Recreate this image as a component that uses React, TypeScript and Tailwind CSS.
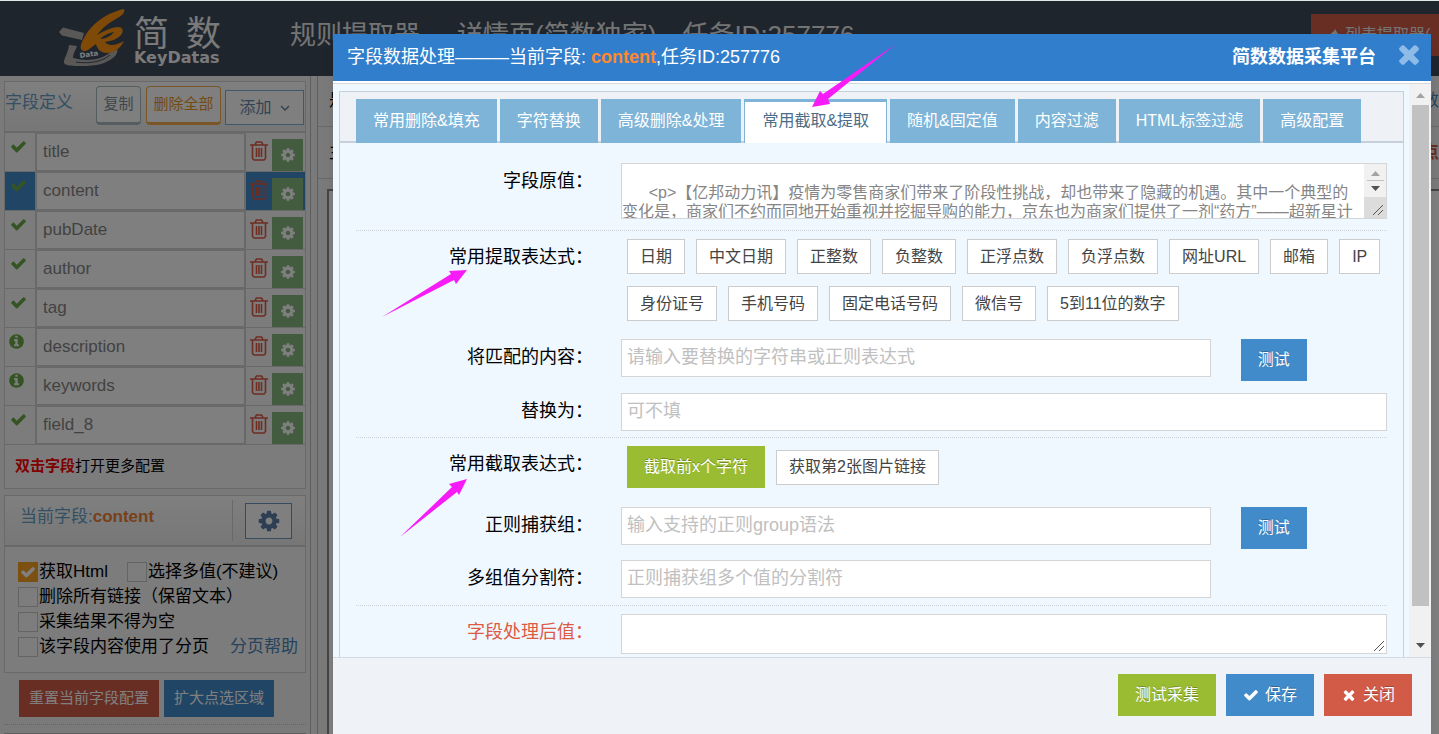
import { useState } from 'react';
import { clsx } from 'clsx';

const ICONS = {
  check:
    'M1671 566q0 40-28 68l-724 724-136 136q-28 28-68 28t-68-28l-136-136-362-362q-28-28-28-68t28-68l136-136q28-28 68-28t68 28l294 295 656-657q28-28 68-28t68 28l136 136q28 28 28 68z',
  times:
    'M1490 1322q0 40-28 68l-136 136q-28 28-68 28t-68-28l-294-294-294 294q-28 28-68 28t-68-28l-136-136q-28-28-28-68t28-68l294-294-294-294q-28-28-28-68t28-68l136-136q28-28 68-28t68 28l294 294 294-294q28-28 68-28t68 28l136 136q28 28 28 68t-28 68l-294 294 294 294q28 28 28 68z',
  cog: 'M1152 896q0-106-75-181t-181-75-181 75-75 181 75 181 181 75 181-75 75-181zm512-109v222q0 12-8 23t-20 13l-185 28q-19 54-39 91 35 50 107 138 10 12 10 25t-9 23q-27 37-99 108t-94 71q-12 0-26-9l-138-108q-44 23-91 38-16 136-29 186-7 28-36 28h-222q-14 0-24.500-8.500t-11.500-21.500l-28-184q-49-16-90-37l-141 107q-10 9-25 9-14 0-25-11-126-114-165-168-7-10-7-23 0-12 8-23 15-21 51-66.500t54-70.500q-27-50-41-99l-183-27q-13-2-21-12.500t-8-23.500v-222q0-12 8-23t19-13l186-28q14-46 39-92-40-57-107-138-10-12-10-24 0-10 9-23 26-36 98.500-107.500t94.500-71.500q13 0 26 10l138 107q44-23 91-38 16-136 29-186 7-28 36-28h222q14 0 24.500 8.500t11.500 21.500l28 184q49 16 90 37l142-107q9-9 24-9 13 0 25 10 129 119 165 170 7 8 7 22 0 12-8 23-15 21-51 66.500t-54 70.500q26 50 41 98l183 28q13 2 21 12.500t8 23.500z',
  info: 'M1152 1376v-160q0-14-9-23t-23-9h-96v-512q0-14-9-23t-23-9h-320q-14 0-23 9t-9 23v160q0 14 9 23t23 9h96v320h-96q-14 0-23 9t-9 23v160q0 14 9 23t23 9h448q14 0 23-9t9-23zm-128-896v-160q0-14-9-23t-23-9h-192q-14 0-23 9t-9 23v160q0 14 9 23t23 9h192q14 0 23-9t9-23zm640 416q0 209-103 385.500t-279.500 279.500-385.500 103-385.500-103-279.500-279.500-103-385.500 103-385.500 279.500-279.500 385.500-103 385.500 103 279.500 279.500 103 385.500z',
};

type IconName = keyof typeof ICONS;

function Icon({ name, className }: { name: IconName; className?: string }) {
  return (
    <svg viewBox="0 0 1792 1792" fill="currentColor" aria-hidden="true" className={clsx('shrink-0', className)}>
      <path d={ICONS[name]} />
    </svg>
  );
}

function TrashIcon() {
  return (
    <svg viewBox="0 0 18 20" className="h-5 w-[18px] text-[#dd5a43]" fill="none" stroke="currentColor" strokeWidth="1.6" aria-hidden="true">
      <path d="M0 4h18M5.500 4V2.500L6.500 1h5l1 1.500V4M2.500 4v13.500L4 19h10l1.500-1.500V4M6.500 7v9M9 7v9M11.500 7v9" />
    </svg>
  );
}

function Caret({ up, className }: { up?: boolean; className?: string }) {
  return (
    <svg viewBox="0 0 9 5" className={clsx('h-[5px] w-[9px]', className)} fill="currentColor" aria-hidden="true">
      <path d={up ? 'M0 5h9L4.500 0z' : 'M0 0h9L4.500 5z'} />
    </svg>
  );
}

function Grip() {
  return (
    <svg viewBox="0 0 12 12" className="h-3 w-3" fill="none" stroke="#555" aria-hidden="true">
      <path d="M1 11L11 1M6 11l5-5" />
    </svg>
  );
}

function Logo() {
  return (
    <div className="flex items-start">
      <svg viewBox="0 0 68 58" className="mt-2 h-[58px] w-[68px]" aria-hidden="true">
        {/* dish */}
        <path d="M1 24L5 19.500 26 25l-2 7-20-4.500z" fill="#b5b0ae" />
        <path d="M11 37l8 1c-1 4-4 7-4 12 12 3 25 3 35-4 5-3 6-6 6-9 5 3 4 9 0 12-8 7-18 9-32 9-9 0-16 0-18-3-1-3 4-9 5-18z" fill="#b5b0ae" />
        <path d="M18 54c12 2 26 0 34-7" fill="none" stroke="#3c4a5a" />
        {/* brush k */}
        <path
          d="M66 1c1 3-1 6-5 8-9 5-17 11-22 18 7-4 15-8 21-8 5 0 6 4 3 8-4 4-9 6-16 7 3 4 10 4 19-1-4 8-10 12-17 12-6 0-10-4-11-9l-8 6c-3 2-6 1-7-1-1-4 1-7 3-11C32 18 47 5 66 1zM42 31c6 0 11-3 14-7-6 1-11 4-14 7z"
          fill="#ff9411"
        />
        <text x="22" y="50" fontSize="7" fontWeight="bold" fill="#fff" fontFamily="DejaVu Sans" transform="rotate(-8 22 50)">
          Data
        </text>
      </svg>
      <div className="ml-2 text-[#f4f4f4]">
        <div className="flex gap-[17px] pt-4 text-[35px] leading-9">
          <span>简</span>
          <span>数</span>
        </div>
        <div className="font-['DejaVu_Sans',sans-serif] text-[16px] leading-3 font-bold">KeyDatas</div>
      </div>
    </div>
  );
}

const FIELDS: { name: string; icon: IconName }[] = [
  { name: 'title', icon: 'check' },
  { name: 'content', icon: 'check' },
  { name: 'pubDate', icon: 'check' },
  { name: 'author', icon: 'check' },
  { name: 'tag', icon: 'check' },
  { name: 'description', icon: 'info' },
  { name: 'keywords', icon: 'info' },
  { name: 'field_8', icon: 'check' },
];

function FieldRow({ name, icon, active }: { name: string; icon: IconName; active: boolean }) {
  return (
    <li className="flex h-[39px] border-b border-[#d2d2d2]">
      <div className={clsx('w-[31px] border-r border-[#d2d2d2] pt-[5px]', icon === 'check' ? 'pl-[5px]' : 'pl-[3px]', active && 'bg-[#428bca]')}>
        <Icon name={icon} className="h-[17px] w-[17px] text-[#69aa46]" />
      </div>
      <input
        aria-label={name}
        defaultValue={name}
        className="min-w-0 flex-1 border border-[#d2d2d2] bg-white px-[6px] text-[17px] text-[#858585] outline-none"
      />
      <div className={clsx('flex w-[60px] items-end justify-between border-l border-[#d2d2d2] pr-[2px] pl-1', active && 'bg-[#428bca]')}>
        <button aria-label={`删除 ${name}`} className="mb-[10px]">
          <TrashIcon />
        </button>
        <button aria-label={`配置 ${name}`} className="flex h-8 w-[31px] items-center justify-center bg-[#87b87f] text-white">
          <Icon name="cog" className="h-4 w-4" />
        </button>
      </div>
    </li>
  );
}

function Check({ label, defaultChecked }: { label: string; defaultChecked?: boolean }) {
  return (
    <label className="flex h-[25px] items-center gap-px">
      <span className="relative flex">
        <input
          type="checkbox"
          defaultChecked={defaultChecked}
          className="peer h-5 w-5 appearance-none border border-[#c8c8c8] bg-[#fafafa] checked:border-[#f9a021] checked:bg-[#f9a021]"
        />
        <Icon name="check" className="absolute top-[2px] left-[2px] hidden h-4 w-4 text-white peer-checked:block" />
      </span>
      {label}
    </label>
  );
}

function Sidebar() {
  return (
    <aside className="w-[311px] shrink-0 border-r border-[#bdbdbd] pt-[5px] pr-1 pl-1 text-[17px]">
      <section className="border border-[#d2d2d2] bg-[#f9f9f9]">
        <div className="flex h-[51px] items-start border-b-2 border-[#d2d2d2] bg-linear-to-b from-white to-[#eee]">
          <h2 className="mt-2 w-[91px] leading-[26px] text-[#669fc7]">字段定义</h2>
          <button className="mt-1 h-[39px] w-[45px] rounded border border-b-[3px] border-[#abbac3] bg-white text-[15px] text-[#808d94]">复制</button>
          <button className="mt-1 ml-[5px] h-[39px] w-[75px] rounded border border-b-[3px] border-[#f0ac4b] bg-white text-[15px] text-[#e59729]">
            删除全部
          </button>
          <button className="mt-2 mr-px ml-1 flex h-[35px] flex-1 items-center justify-center gap-2 border border-[#7fb0d8] bg-white text-[16px] text-[#6688a6]">
            添加
            <svg viewBox="0 0 10 6" className="h-[6px] w-[10px]" fill="none" stroke="currentColor" strokeWidth="1.500" aria-hidden="true">
              <path d="M1 1l4 4 4-4" />
            </svg>
          </button>
        </div>
        <ul>
          {FIELDS.map((field) => (
            <FieldRow key={field.name} {...field} active={field.name === 'content'} />
          ))}
        </ul>
        <p className="px-[10px] pt-2 pb-[9px] text-[15px] leading-[26px]">
          <b className="text-[#f00]">双击字段</b>打开更多配置
        </p>
      </section>

      <section className="mt-[6px] border border-[#d2d2d2] bg-[#f9f9f9]">
        <div className="flex h-[51px] border-b-2 border-[#d2d2d2] bg-linear-to-b from-white to-[#eee]">
          <h2 className="mt-2 flex-1 pl-[15px] leading-[26px] text-[#669fc7]">
            当前字段:<b className="text-[#f08030]">content</b>
          </h2>
          <span className="my-1 w-px bg-[#d2d2d2]" />
          <button aria-label="当前字段配置" className="mt-[7px] mr-[13px] ml-3 flex h-9 w-[47px] items-center justify-center border border-[#6d97bb] bg-white text-[#5c7fa8]">
            <Icon name="cog" className="h-6 w-6" />
          </button>
        </div>
        <div className="px-[13px] pt-3 pb-3 text-black">
          <div className="flex gap-[19px]">
            <Check label="获取Html" defaultChecked />
            <Check label="选择多值(不建议)" />
          </div>
          <Check label="删除所有链接（保留文本）" />
          <Check label="采集结果不得为空" />
          <div className="flex items-center justify-between">
            <Check label="该字段内容使用了分页" />
            <a href="#help" className="-mr-[6px] text-[#4d86bb]">
              分页帮助
            </a>
          </div>
        </div>
      </section>

      <div className="mt-[7px] flex gap-[5px] border-b border-dotted border-[#c8c8c8] px-[15px] pb-[7px] text-[15px] text-white">
        <button className="h-[37px] bg-[#d15b47] px-[10px]">重置当前字段配置</button>
        <button className="h-[37px] bg-[#428bca] px-[10px]">扩大点选区域</button>
      </div>
      <div className="mt-2 border-t border-[#bdbdbd]" />
    </aside>
  );
}

function ExtractorPage() {
  return (
    <div className="flex h-full flex-col bg-[#f4f4f4]">
      <header className="flex h-[76px] shrink-0 items-start bg-[#3c4a5a] pl-[58px] text-[#e8e8e8]">
        <Logo />
        <h1 className="mt-[17px] ml-[69px] flex text-[26px] leading-9">
          <span>规则提取器</span>
          <span className="ml-[37px]">详情页(简数独家)</span>
          <span className="ml-[26px]">任务ID:257776</span>
        </h1>
        <div className="mt-[14px] flex flex-1 justify-end">
          <button className="flex h-[42px] w-32 items-center gap-[6px] overflow-hidden bg-[#d15b47] pl-[18px] text-[16px] whitespace-nowrap">
            <svg viewBox="0 0 10 14" className="h-[14px] w-[10px] shrink-0" fill="currentColor" aria-hidden="true">
              <path d="M6 0c0 3 4 5 4 9a5 5 0 0 1-10 0c0-3 3-4 5-6 1-1 1-2 1-3z" />
            </svg>
            列表提取器(
          </button>
        </div>
      </header>
      <div className="flex min-h-0 flex-1">
        <Sidebar />
        <main className="ml-[6px] flex flex-1 flex-col border-l border-[#bdbdbd] text-[17px]">
          <div className="flex h-[51px] items-center justify-between border-b border-[#d2d2d2] pl-[11px] text-black">
            <span>是</span>
            <span className="text-[#4d86bb]">数</span>
          </div>
          <div className="flex h-[52px] items-center justify-between border-b border-[#d2d2d2] pl-[11px] text-black">
            <span>主</span>
            <b className="text-[#d15b47]">点</b>
          </div>
          <div className="mt-[10px] ml-[9px] flex-1 border-t-2 border-l-2 border-[#8a8a8a] bg-white" />
        </main>
      </div>
    </div>
  );
}

const TABS = ['常用删除&填充', '字符替换', '高级删除&处理', '常用截取&提取', '随机&固定值', '内容过滤', 'HTML标签过滤', '高级配置'];

const EXTRACTORS = [
  '日期', '中文日期', '正整数', '负整数', '正浮点数', '负浮点数', '网址URL', '邮箱', 'IP',
  '身份证号', '手机号码', '固定电话号码', '微信号', '5到11位的数字',
];

const SOURCE_TEXT = `
      <p>【亿邦动力讯】疫情为零售商家们带来了阶段性挑战，却也带来了隐藏的机遇。其中一个典型的
变化是，商家们不约而同地开始重视并挖掘导购的能力，京东也为商家们提供了一剂“药方”——超新星计`;

const inputClass = 'h-[38px] border border-[#d5d5d5] bg-white px-[5px] pb-[2px] text-[18px] text-[#555] outline-none placeholder:text-[#c0c0c0]';
const chipClass = 'h-[35px] border border-[#ccc] bg-white px-3 text-[16px] text-[#444]';
const solidClass = 'flex h-[42px] items-center justify-center gap-[6px] px-[17px] text-[16px] text-white text-shadow-[0_-1px_0_rgb(0_0_0/0.25)]';

function Row({ label, htmlFor, danger, className, children }: {
  label: string;
  htmlFor?: string;
  danger?: boolean;
  className?: string;
  children: React.ReactNode;
}) {
  const labelClass = clsx('w-[237px] shrink-0 pt-[5px] text-right text-[18px] leading-[26px]', danger ? 'text-[#dd5a43]' : 'text-black');
  return (
    <div className={clsx('flex items-start gap-7', className)}>
      {htmlFor ? (
        <label htmlFor={htmlFor} className={labelClass}>{label}</label>
      ) : (
        <span className={labelClass}>{label}</span>
      )}
      <div className="min-w-0 flex-1">{children}</div>
    </div>
  );
}

function Divider({ className }: { className?: string }) {
  return <hr className={clsx('border-t border-dotted border-[#cfd3dc]', className)} />;
}

function ProcessForm() {
  return (
    <div className="px-4 pt-5">
      <Row label="字段原值：" htmlFor="source">
        <div className="relative">
          <textarea
            id="source"
            readOnly
            wrap="off"
            defaultValue={SOURCE_TEXT}
            className="block h-14 w-full resize-none overflow-hidden border border-[#d5d5d5] bg-white text-[16px] leading-[19px] text-[#858585] outline-none"
          />
          {/* scroll buttons and resize corner */}
          <div className="absolute top-px right-px flex h-[54px] w-[22px] flex-col items-center bg-[#f1f1f1]">
            <Caret up className="mt-[7px] text-[#a3a3a3]" />
            <span className="mt-1 h-px w-[17px] bg-[#c1c1c1]" />
            <Caret className="mt-[5px] text-[#505050]" />
            <span className="mt-[6px] flex w-full flex-1 items-end justify-end bg-[#dcdcdc] p-[2px]">
              <Grip />
            </span>
          </div>
        </div>
      </Row>
      <Divider className="mt-[11px] mb-2" />

      <Row label="常用提取表达式：">
        <div className="flex flex-wrap gap-x-[11px] gap-y-3 pl-[6px]">
          {EXTRACTORS.map((name) => (
            <button key={name} className={chipClass}>{name}</button>
          ))}
        </div>
      </Row>
      <Row label="将匹配的内容：" htmlFor="pattern" className="mt-[18px]">
        <div className="flex items-start gap-[30px]">
          <input id="pattern" placeholder="请输入要替换的字符串或正则表达式" className={clsx(inputClass, 'w-[77%]')} />
          <button className={solidClass + ' bg-[#428bca]'}>测试</button>
        </div>
      </Row>
      <Row label="替换为：" htmlFor="replacement" className="mt-3">
        <input id="replacement" placeholder="可不填" className={clsx(inputClass, 'w-full')} />
      </Row>
      <Divider className="mt-[6px] mb-2" />

      <Row label="常用截取表达式：">
        <div className="flex items-center gap-[11px] pl-[6px]">
          <button className={solidClass + ' bg-[#9abc32]'}>截取前x个字符</button>
          <button className={chipClass}>获取第2张图片链接</button>
        </div>
      </Row>
      <Row label="正则捕获组：" htmlFor="group" className="mt-[19px]">
        <div className="flex items-start gap-[30px]">
          <input id="group" placeholder="输入支持的正则group语法" className={clsx(inputClass, 'w-[77%]')} />
          <button className={solidClass + ' bg-[#428bca]'}>测试</button>
        </div>
      </Row>
      <Row label="多组值分割符：" htmlFor="separator" className="mt-[11px]">
        <input id="separator" placeholder="正则捕获组多个值的分割符" className={clsx(inputClass, 'w-[77%]')} />
      </Row>
      <Divider className="mt-[7px] mb-2" />

      <Row label="字段处理后值：" htmlFor="result" danger>
        <div className="relative">
          <textarea id="result" className="block h-10 w-full resize-none border border-[#d5d5d5] bg-white outline-none" />
          <span className="absolute right-[2px] bottom-[2px]">
            <Grip />
          </span>
        </div>
      </Row>
    </div>
  );
}

function ProcessDialog() {
  const [tab, setTab] = useState(3);

  return (
    <div role="dialog" aria-label="字段数据处理" className="flex h-full flex-col bg-[#eff7ff] shadow-lg">
      <header className="flex h-[47px] shrink-0 items-start bg-[#307ecc] pt-[5px] pr-[7px] pl-[14px] text-[18px] leading-[26px] text-white">
        <h3 className="flex-1 pt-[5px]">
          字段数据处理———当前字段: <b className="text-[#ff892a]">content</b>,任务ID:257776
        </h3>
        <b className="pt-[5px]">简数数据采集平台</b>
        <button aria-label="关闭窗口" className="ml-[18px] text-[#8fbbe9]">
          <Icon name="times" className="h-[30px] w-[30px]" />
        </button>
      </header>
      <div className="h-[3px] shrink-0 border-t border-b border-t-white border-b-[#d8d8dc] bg-white" />

      <div className="flex min-h-0 flex-1 overflow-hidden">
        <div className="min-w-0 flex-1 pt-[7px] pr-[5px] pl-[6px]">
          <div className="h-full border border-b-0 border-[#c5d0dc]">
            <nav className="flex h-[51px] items-end gap-[3px] border-b-2 border-[#c5d0dc] bg-[#eef1f6] pl-4">
              {TABS.map((name, i) => (
                <button
                  key={name}
                  onClick={() => setTab(i)}
                  className={clsx(
                    '-mb-[2px] h-11 px-[17px] text-[16px] whitespace-nowrap',
                    tab === i
                      ? 'border-x border-t-[3px] border-[#7db4d8] bg-white pb-[3px] text-[#4c6d87]'
                      : 'bg-[#7db4d8] text-white',
                  )}
                >
                  {name}
                </button>
              ))}
            </nav>
            <ProcessForm />
          </div>
        </div>
        {/* scrollbar */}
        <div className="flex w-[22px] shrink-0 flex-col items-center bg-[#f1f1f1] pt-[9px] pb-[9px]">
          <Caret up className="text-[#a3a3a3]" />
          <span className="mt-[7px] w-[17px] flex-1 bg-[#c1c1c1]" />
          <Caret className="mt-[37px] text-[#505050]" />
        </div>
      </div>

      <footer className="flex h-[77px] shrink-0 items-start justify-end gap-[10px] border-t border-[#d5dae0] bg-[#eff3f8] pt-4 pr-[19px]">
        <button className={solidClass + ' bg-[#9abc32]'}>测试采集</button>
        <button className={solidClass + ' bg-[#428bca]'}>
          <Icon name="check" className="h-4 w-4" />
          保存
        </button>
        <button className={solidClass + ' bg-[#d15b47]'}>
          <Icon name="times" className="h-4 w-4" />
          关闭
        </button>
      </footer>
    </div>
  );
}

function Pointers() {
  return (
    <svg className="pointer-events-none absolute inset-0 h-full w-full" fill="#f71cf7" aria-hidden="true">
      <polygon points="812,107 820,91 823,94 896,44 828,99 830,104" />
      <polygon points="467,270 456,284 454,280 382,317 451,274 449,271" />
      <polygon points="467,479 459,495 457,492 400,537 452,487 449,484" />
    </svg>
  );
}

export default function App() {
  return (
    <div className="relative h-screen overflow-hidden font-['Liberation_Sans','Noto_Sans_CJK_SC',sans-serif]">
      <ExtractorPage />
      <div className="absolute inset-0 border-t border-[#dfe9e9] bg-black/50 pt-[33px] pr-2 pl-[333px]">
        <ProcessDialog />
      </div>
      <Pointers />
    </div>
  );
}
